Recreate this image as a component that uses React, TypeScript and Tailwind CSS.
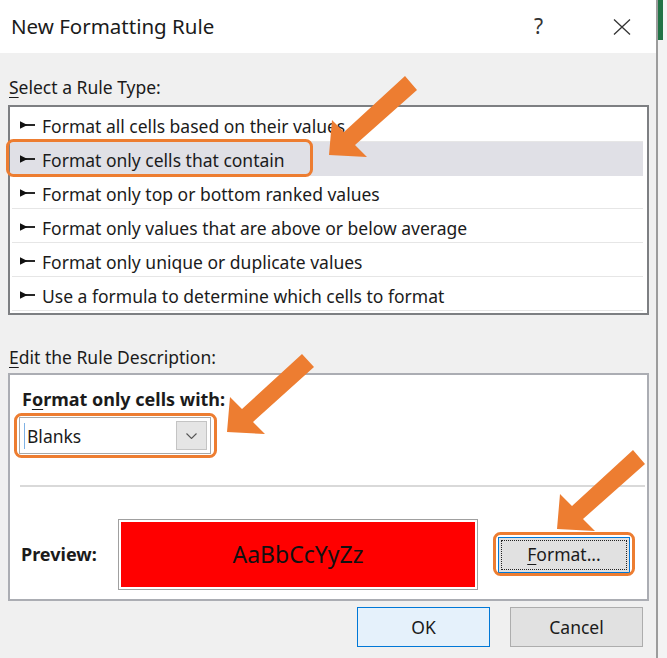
import React from "react";

const rows = [
  "Format all cells based on their values",
  "Format only cells that contain",
  "Format only top or bottom ranked values",
  "Format only values that are above or below average",
  "Format only unique or duplicate values",
  "Use a formula to determine which cells to format",
];

function Bullet() {
  return (
    <svg width="15" height="8" viewBox="0 0 15 8" className="shrink-0">
      <polygon points="0,0.3 7.5,4 0,7.7" fill="#111" />
      <rect x="5" y="3.1" width="10" height="1.8" fill="#111" />
    </svg>
  );
}

export default function App() {
  return (
    <div className="relative w-[667px] h-[658px] overflow-hidden flex font-['Noto_Sans','Open_Sans',sans-serif] text-[#1b1b1b]">
      <div className="w-[656px] h-full flex flex-col bg-[#f0f0f0]">
        {/* title bar */}
        <div className="h-[53px] bg-white flex items-center pl-[11px] shrink-0">
          <span className="text-[20.5px] leading-none">New Formatting Rule</span>
          <span className="ml-auto text-[21px] leading-none text-[#333] mr-[70px]">?</span>
          <svg width="18" height="16" viewBox="0 0 18 16" className="mr-[25px]">
            <path d="M1 0.5 L17 15.5 M17 0.5 L1 15.5" stroke="#333" strokeWidth="1.3" />
          </svg>
        </div>

        <div className="flex flex-col pl-[8px] pr-[7px]">
          <div className="pt-[22px] h-[52px] text-[17.5px] leading-[24px] pl-[1px]">
            <span className="underline underline-offset-[3px]">S</span>elect a Rule Type:
          </div>
          <div className="h-[210px] border-2 border-[#7d7f82] bg-white pt-[1px] pr-[4px]">
            {rows.map((r, i) => (
              <div
                key={r}
                className={
                  "h-[34px] flex items-center gap-[7px] pl-[10px] text-[17.5px] " +
                  (i === 1 ? "bg-[#e0e0e6]" : "")
                }
              >
                <Bullet />
                <span className="pt-[3px]">{r}</span>
              </div>
            ))}
          </div>
          <div className="h-[58px] pt-[30px] text-[17.5px] leading-[24px] pl-[1px]">
            <span className="underline underline-offset-[3px]">E</span>dit the Rule Description:
          </div>
          <div className="h-[228px] border-2 border-[#abadb3] bg-white flex flex-col pl-[9px] pr-[2px]">
            <div className="pt-[12px] pl-[3px] text-[18px] leading-[24px] font-bold">
              F<span className="underline underline-offset-[3px]">o</span>rmat only cells with:
            </div>
            <div className="mt-[6px] w-[192px] h-[37px] border border-[#a8a8a8] bg-white flex items-center p-[3px]">
              <div className="w-[1px] h-[26px] bg-[#7fb2e5] ml-[1px]" />
              <span className="ml-[2px] text-[17.5px] pt-[1px]">Blanks</span>
              <div className="ml-auto w-[31px] h-full bg-[#e5e5e5] border border-[#c4c4c4] flex items-center justify-center">
                <svg width="11" height="6" viewBox="0 0 11 6">
                  <path d="M0.5 0.5 L5.5 5.5 L10.5 0.5" stroke="#555" strokeWidth="1.1" fill="none" />
                </svg>
              </div>
            </div>
            <div className="mt-[31px] ml-[1px] h-[2px] bg-[#d9d9d9]" />
            <div className="mt-[32px] flex items-center">
              <span className="pl-[2px] w-[99px] text-[18px] font-bold">Preview:</span>
              <div className="w-[360px] h-[71px] border border-[#a0a0a0] p-[2px]">
                <div className="w-full h-full bg-[#ff0000] flex items-center justify-center text-[23px] text-[#111]">
                  AaBbCcYyZz
                </div>
              </div>
              <div className="ml-[20px] w-[132px] h-[36px] border border-[#0078d7] bg-[#e1e1e1] p-[2px]">
                <div className="w-full h-full border border-dotted border-[#222] flex items-center justify-center text-[17.5px]">
                  <span>
                    <span className="underline underline-offset-[3px]">F</span>ormat...
                  </span>
                </div>
              </div>
            </div>
          </div>
          <div className="mt-[6px] flex justify-end gap-[20px] pr-[6px]">
            <div className="w-[133px] h-[40px] bg-[#e5f1fb] border border-[#0078d7] flex items-center justify-center text-[17.5px]">
              OK
            </div>
            <div className="w-[133px] h-[40px] bg-[#e1e1e1] border border-[#adadad] flex items-center justify-center text-[17.5px]">
              Cancel
            </div>
          </div>
        </div>
      </div>
      {/* excel strip at right */}
      <div className="w-[11px] h-full border-l-2 border-[#9c9c9c] bg-[#f3f3f3] flex flex-col">
        <div className="w-[5px] h-[40px] bg-[#217346]" />
      </div>

      {/* list row separators & annotations overlay */}
      <svg className="absolute inset-0 pointer-events-none" width="667" height="658" viewBox="0 0 667 658">
        {[141, 208, 242, 276, 310].map((y) => (
          <line key={y} x1="12" x2="643" y1={y + 0.5} y2={y + 0.5} stroke="#e6e6e6" strokeWidth="1" />
        ))}
        <g fill="#ED7D31">
          <polygon points="405,76 417,90 355,145 367,157 329,155 332,120 344,132" />
          <polygon points="302,354 314,367 253,422 265,434 227,432 230,397 242,409" />
          <polygon points="633,450 645,464 583,519 595,531 557,529 560,494 572,506" />
        </g>
        <g fill="none" stroke="#ED7D31" strokeWidth="3">
          <rect x="7.5" y="140.5" width="304" height="35" rx="6" />
          <rect x="15.5" y="414.5" width="200" height="42" rx="6" />
          <rect x="494.5" y="533.5" width="139" height="41" rx="6" />
        </g>
      </svg>
    </div>
  );
}
